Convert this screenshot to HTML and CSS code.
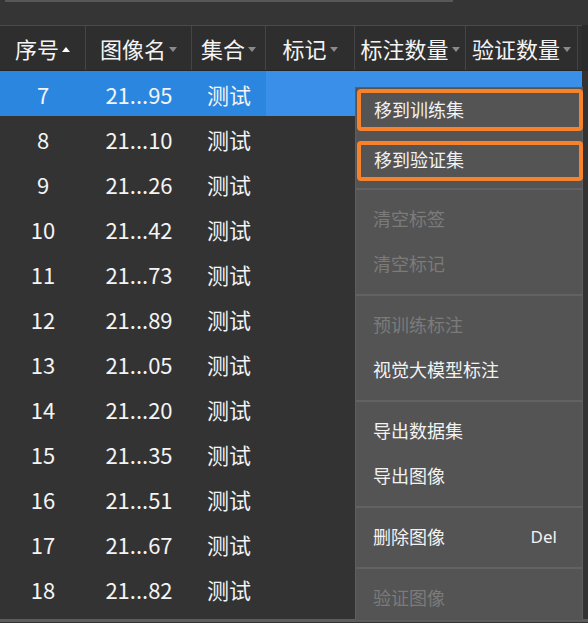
FILE: index.html
```html
<!DOCTYPE html>
<html lang="zh-CN">
<head>
    <meta charset="UTF-8">
    <meta name="viewport" content="width=device-width, initial-scale=1.0">
    <link rel="stylesheet" href="styles.css">
    <title>图像列表</title>
</head>
<body>
    <div class="toolbar">
        <div class="search"></div>
    </div>

    <div class="table">
        <div class="row head">
            <div class="cell"><span>序号</span><i class="sort up"></i></div>
            <div class="cell"><span>图像名</span><i class="sort"></i></div>
            <div class="cell"><span>集合</span><i class="sort"></i></div>
            <div class="cell"><span>标记</span><i class="sort"></i></div>
            <div class="cell"><span>标注数量</span><i class="sort"></i></div>
            <div class="cell"><span>验证数量</span><i class="sort"></i></div>
        </div>

        <div class="rows">
            <div class="row selected">
                <div class="cell">7</div>
                <div class="cell">21...95</div>
                <div class="cell">测试</div>
                <div class="cell"></div>
                <div class="cell"><i class="peek"></i></div>
                <div class="cell"></div>
            </div>
            <div class="row"><div class="cell">8</div><div class="cell">21...10</div><div class="cell">测试</div></div>
            <div class="row"><div class="cell">9</div><div class="cell">21...26</div><div class="cell">测试</div></div>
            <div class="row"><div class="cell">10</div><div class="cell">21...42</div><div class="cell">测试</div></div>
            <div class="row"><div class="cell">11</div><div class="cell">21...73</div><div class="cell">测试</div></div>
            <div class="row"><div class="cell">12</div><div class="cell">21...89</div><div class="cell">测试</div></div>
            <div class="row"><div class="cell">13</div><div class="cell">21...05</div><div class="cell">测试</div></div>
            <div class="row"><div class="cell">14</div><div class="cell">21...20</div><div class="cell">测试</div></div>
            <div class="row"><div class="cell">15</div><div class="cell">21...35</div><div class="cell">测试</div></div>
            <div class="row"><div class="cell">16</div><div class="cell">21...51</div><div class="cell">测试</div></div>
            <div class="row"><div class="cell">17</div><div class="cell">21...67</div><div class="cell">测试</div></div>
            <div class="row"><div class="cell">18</div><div class="cell">21...82</div><div class="cell">测试</div></div>
        </div>
    </div>
    <div class="statusbar"></div>

    <!-- right click menu on row 7 -->
    <div class="menu">
        <div class="item marked first">移到训练集</div>
        <div class="item marked second">移到验证集</div>
        <div class="sep"></div>
        <div class="item disabled">清空标签</div>
        <div class="item disabled">清空标记</div>
        <div class="sep"></div>
        <div class="item disabled">预训练标注</div>
        <div class="item">视觉大模型标注</div>
        <div class="sep"></div>
        <div class="item">导出数据集</div>
        <div class="item">导出图像</div>
        <div class="sep"></div>
        <div class="item"><span>删除图像</span><span class="key">Del</span></div>
        <div class="sep"></div>
        <div class="item disabled">验证图像</div>
    </div>
</body>
</html>
```

FILE: styles.css
```css
body {
    margin: 0;
    width: 588px;
    height: 623px;
    overflow: hidden;
    background-color: #333333;
    font-family: "Noto Sans CJK SC", "Noto Sans", sans-serif;
    color: #f4f4f4;
    position: relative;
}

.toolbar {
    height: 25px;
    background-color: #353535;
}

.search {
    margin-left: 5px;
    width: 448px;
    height: 2px;
    background-color: #575757;
}

.table {
    background-color: #2b2b2b;
}

.row {
    display: grid;
    grid-template-columns: 86px 106px 74px 89px 111px 112px;
    width: 582px;
    height: 45px;
    font-size: 22px;
}

.cell {
    display: flex;
    align-items: center;
    justify-content: center;
}

.head {
    height: 44px;
    border-top: 1px solid #4a4a4a;
    border-bottom: 1px solid #252525;
    background-color: #2e2e2e;
}

.head .cell {
    border-right: 1px solid #454545;
}

.sort {
    display: inline-block;
    width: 0;
    height: 0;
    margin-left: 3px;
    margin-top: 2px;
    border-left: 4px solid transparent;
    border-right: 4px solid transparent;
    border-top: 5px solid #8a8a8a;
}

.sort.up {
    border-top: none;
    border-bottom: 5px solid #ffffff;
}

.rows {
    height: 548px;
    overflow: hidden;
    background-color: #333333;
}

.rows .row {
    background-color: #333333;
}

.selected.row {
    background-color: #3a90e8;
}

.selected .cell:nth-child(-n+3) {
    background-color: #2b86e0;
}

/* top of a value that the menu hides */
.peek {
    display: block;
    width: 5px;
    height: 2px;
    margin-bottom: 7px;
    background-color: #e8f0fa;
}

.statusbar {
    height: 3px;
    background-color: #5c5c5c;
}

/* context menu */
.menu {
    position: absolute;
    left: 355px;
    top: 87px;
    width: 228px;
    height: 533px;
    box-sizing: border-box;
    padding-top: 1px;
    background-color: #545454;
    border: 1px solid #5e5e5e;
    border-bottom: none;
    font-size: 18px;
    display: flex;
    flex-direction: column;
}

.item {
    height: 45px;
    box-sizing: border-box;
    flex-shrink: 0;
    display: flex;
    align-items: center;
    justify-content: space-between;
    padding: 0 25px 3px 17px;
    color: #f2f2f2;
}

.item.disabled {
    color: #7b7b7b;
}

.item.marked {
    margin: 0 -1px 0 1px;
    padding-left: 13px;
    border: 4px solid #f7822b;
    border-radius: 4px;
}

.item.first {
    height: 42px;
}

.item.second {
    height: 40px;
    margin-top: 10px;
    padding-bottom: 5px;
}

.sep {
    height: 2px;
    margin: 7px 0;
    flex-shrink: 0;
    background-color: #626262;
}

.key {
    font-family: "Noto Sans", sans-serif;
    font-size: 17px;
}
```
